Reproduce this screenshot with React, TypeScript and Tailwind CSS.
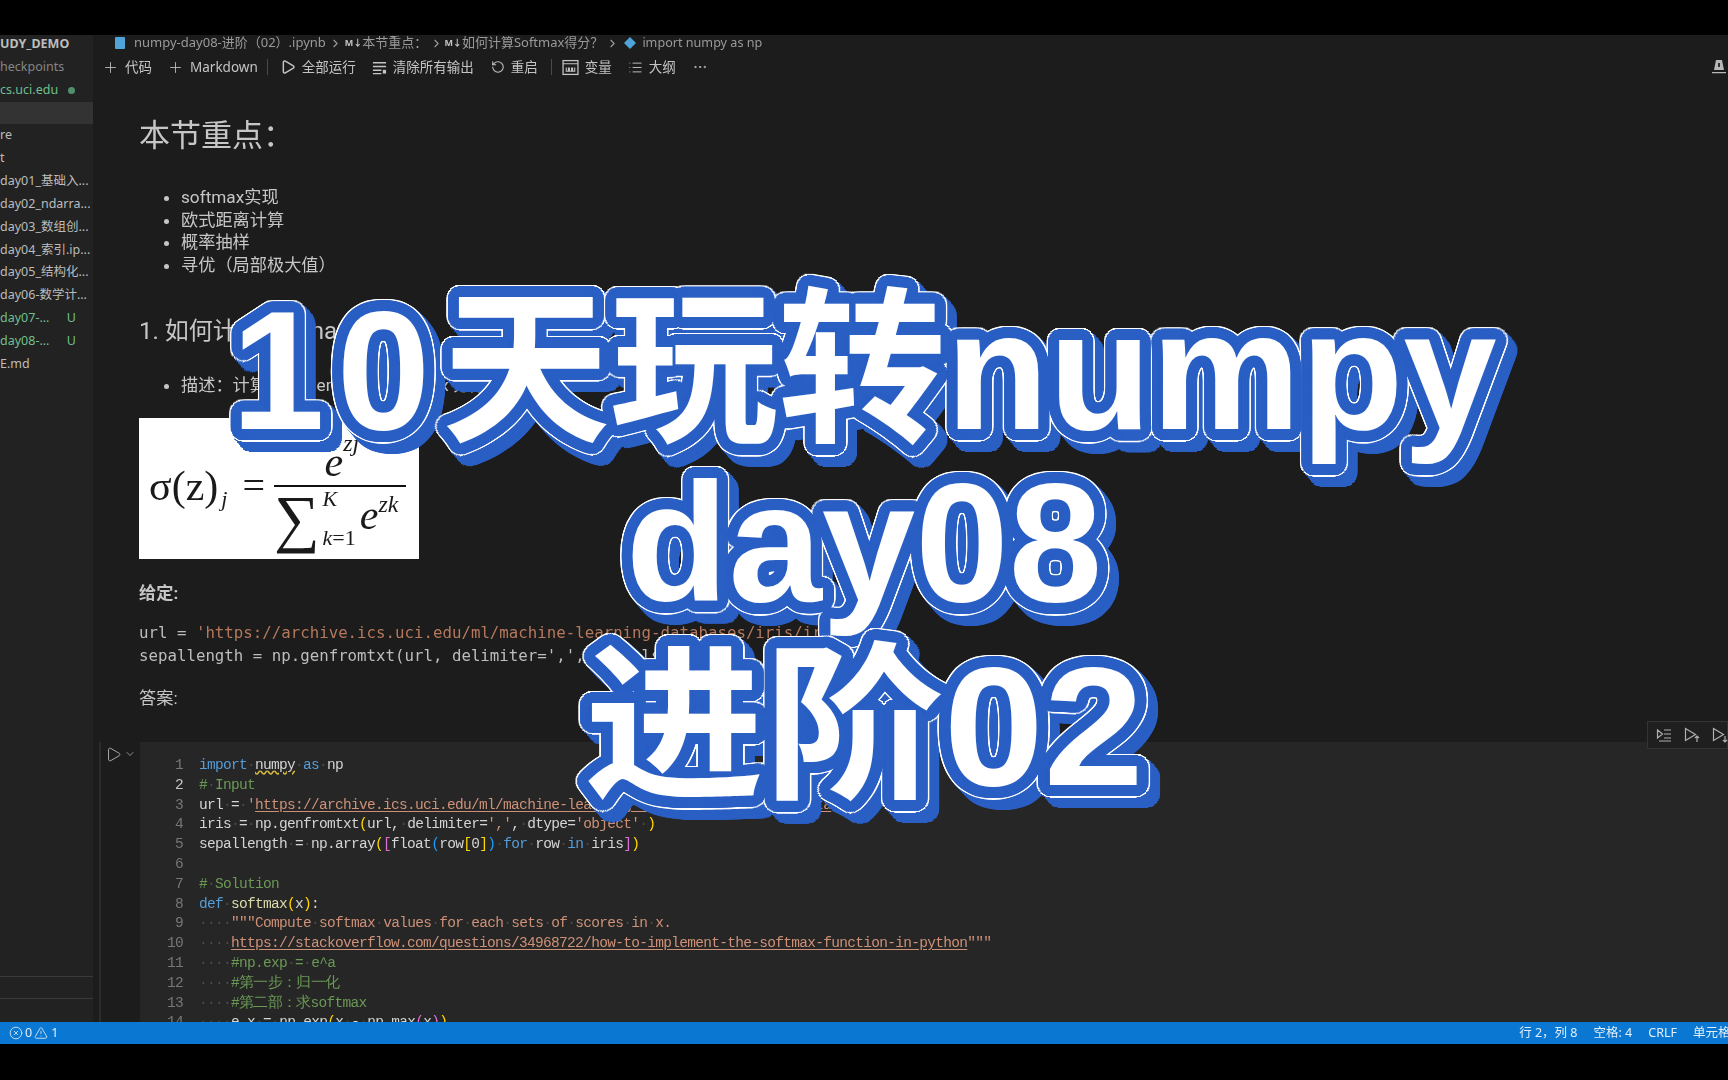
import { Plus, Play, RotateCcw, MoreHorizontal, ChevronRight, ChevronDown, CircleX, TriangleAlert, List } from "lucide-react";

const sidebarRows = [
  { text: "UDY_DEMO", cls: "font-bold text-[#bdbdbd]" },
  { text: "heckpoints", cls: "text-[#858585]" },
  { text: "cs.uci.edu", cls: "text-[#6fbf8f]", dot: true },
  { text: "", cls: "", active: true },
  { text: "re", cls: "text-[#bcbcbc]" },
  { text: "t", cls: "text-[#bcbcbc]" },
  { text: "day01_基础入...", cls: "text-[#bcbcbc]" },
  { text: "day02_ndarra...", cls: "text-[#bcbcbc]" },
  { text: "day03_数组创...", cls: "text-[#bcbcbc]" },
  { text: "day04_索引.ip...", cls: "text-[#bcbcbc]" },
  { text: "day05_结构化...", cls: "text-[#bcbcbc]" },
  { text: "day06-数学计...", cls: "text-[#bcbcbc]" },
  { text: "day07-...", cls: "text-[#6fbf8f]", badge: "U" },
  { text: "day08-...", cls: "text-[#6fbf8f]", badge: "U" },
  { text: "E.md", cls: "text-[#bcbcbc]" },
];

const KW = "text-[#569cd6]";
const STR = "text-[#ce9178]";
const LINK = "text-[#ce9178] underline decoration-[#ce9178] underline-offset-2";
const COM = "text-[#6a9955]";
const TXT = "text-[#d4d4d4]";
const FN = "text-[#dcdcaa]";
const Y = "text-[#ffd700]";
const P = "text-[#da70d6]";
const B = "text-[#179fff]";

const codeLines: [string, string][][] = [
  [["import", KW], [" ", TXT], ["numpy", "text-[#d4d4d4] underline decoration-wavy decoration-[#d7ba3d]"], [" ", TXT], ["as", KW], [" np", TXT]],
  [["# Input", COM]],
  [["url = ", TXT], ["'", STR], ["https://archive.ics.uci.edu/ml/machine-learning-databases/iris/iris.data", LINK], ["'", STR]],
  [["iris = np.genfromtxt", TXT], ["(", Y], ["url, delimiter=", TXT], ["','", STR], [", dtype=", TXT], ["'object'", STR], [" ", TXT], [")", Y]],
  [["sepallength = np.array", TXT], ["(", Y], ["[", P], ["float", TXT], ["(", B], ["row", TXT], ["[", Y], ["0", TXT], ["]", Y], [")", B], [" ", TXT], ["for", KW], [" row ", TXT], ["in", KW], [" iris", TXT], ["]", P], [")", Y]],
  [],
  [["# Solution", COM]],
  [["def", KW], [" ", TXT], ["softmax", FN], ["(", Y], ["x", TXT], [")", Y], [":", TXT]],
  [["    ", TXT], ['"""Compute softmax values for each sets of scores in x.', STR]],
  [["    ", TXT], ["https://stackoverflow.com/questions/34968722/how-to-implement-the-softmax-function-in-python", LINK], ['"""', STR]],
  [["    ", TXT], ["#np.exp = e^a", COM]],
  [["    ", TXT], ["#第一步：归一化", COM]],
  [["    ", TXT], ["#第二部：求softmax", COM]],
  [["    ", TXT], ["e_x = np.exp", TXT], ["(", Y], ["x - np.max", TXT], ["(", P], ["x", TXT], [")", P], [")", Y]],
];

function CodeText({ text, cls }: { text: string; cls: string }) {
  // spaces are drawn as dots, the way the editor shows whitespace
  const parts = text.split(/( )/).filter(Boolean);
  return (
    <span className={cls}>
      {parts.map((p, i) => (p === " " ? <span key={i} className="text-[#4b4b4b]">·</span> : <span key={i}>{p}</span>))}
    </span>
  );
}

function VariableIcon() {
  return (
    <svg width="17" height="17" viewBox="0 0 16 16" fill="none" stroke="currentColor" strokeWidth="1.2">
      <rect x="1" y="1.5" width="14" height="13" />
      <path d="M1 4.5h14M4 8v3.5h2V8M7 8v3.5h2V8M10 8v3.5h2V8" strokeWidth="1" />
    </svg>
  );
}

function ClearIcon() {
  return (
    <svg width="15" height="15" viewBox="0 0 16 16" fill="none" stroke="currentColor" strokeWidth="1.5" className="ml-[16px] shrink-0">
      <path d="M1 3h14M1 7h14M1 11h9M1 14.5h9" />
      <rect x="11.5" y="10.5" width="3.5" height="4" fill="currentColor" stroke="none" />
    </svg>
  );
}

function Toolbar() {
  return (
    <div className="h-[32px] flex items-center pl-[9px] text-[13.5px] text-[#c4c4c4] relative">
      <Plus size={17} strokeWidth={1.2} />
      <span className="ml-[6px]">代码</span>
      <Plus size={17} strokeWidth={1.2} className="ml-[15px]" />
      <span className="ml-[6px]">Markdown</span>
      <div className="w-px h-[16px] bg-[#4a4a4a] ml-[9px]" />
      <Play size={16} strokeWidth={2.2} className="ml-[12px]" />
      <span className="ml-[6px]">全部运行</span>
      <ClearIcon />
      <span className="ml-[6px]">清除所有输出</span>
      <RotateCcw size={14} strokeWidth={1.8} className="ml-[17px]" />
      <span className="ml-[6px]">重启</span>
      <div className="w-px h-[16px] bg-[#4a4a4a] ml-[13px]" />
      <span className="ml-[10px]"><VariableIcon /></span>
      <span className="ml-[6px]">变量</span>
      <List size={15} strokeWidth={1.5} className="ml-[16px]" />
      <span className="ml-[6px]">大纲</span>
      <MoreHorizontal size={16} strokeWidth={1.3} className="ml-[16px]" />
      <svg width="16" height="16" viewBox="0 0 16 16" className="ml-auto mr-[1px] fill-[#b8b8b8]">
        <path d="M5 1h6l2 10H3zM1 13h14v1.2H1z" />
        <rect x="7" y="4" width="2" height="4" className="fill-[#333333]" />
      </svg>
    </div>
  );
}

function Breadcrumbs() {
  return (
    <div className="h-[16px] flex items-center pl-[21px] text-[13px] text-[#9a9a9a] whitespace-nowrap">
      <svg width="12" height="14" viewBox="0 0 12 14" className="fill-[#4fa3d8] shrink-0"><path d="M2 1h8a1 1 0 0 1 1 1v10a1 1 0 0 1-1 1H2a1 1 0 0 1-1-1V2a1 1 0 0 1 1-1z" /></svg>
      <span className="ml-[8px]">numpy-day08-进阶（02）.ipynb</span>
      <ChevronRight size={13} className="ml-[3px]" />
      <span className="ml-[3px] text-[9px] font-bold text-[#c4c4c4]">M↓</span>
      <span>本节重点：</span>
      <ChevronRight size={13} className="ml-[3px]" />
      <span className="ml-[1px] text-[9px] font-bold text-[#c4c4c4]">M↓</span>
      <span>如何计算Softmax得分？</span>
      <ChevronRight size={13} className="ml-[3px]" />
      <svg width="14" height="14" viewBox="0 0 14 14" className="fill-[#4fa3d8] ml-[4px] shrink-0"><path d="M7 1l6 6-6 6-6-6z" /></svg>
      <span className="ml-[5px] text-[12.6px]">import numpy as np</span>
    </div>
  );
}

function Formula() {
  return (
    <div className="w-[280px] h-[141px] bg-white text-[#1a1a1a] flex items-center pl-[10px] pb-[6px] font-['Liberation_Serif',serif] shrink-0">
      <span className="text-[42px] leading-none">σ(z)</span>
      <span className="text-[22px] italic mt-[26px] ml-[3px]">j</span>
      <span className="text-[40px] leading-none ml-[15px] mr-[9px]">=</span>
      <div className="flex flex-col items-center w-[132px]">
        <div className="h-[66px] flex items-end pb-[2px] pl-[4px]">
          <span className="text-[42px] italic leading-none">e</span>
          <span className="text-[24px] italic leading-none mb-[28px]">zj</span>
        </div>
        <div className="w-full h-[2px] bg-[#111]" />
        <div className="h-[66px] w-full flex items-start">
          <span className="text-[64px] leading-none">∑</span>
          <div className="flex flex-col ml-[3px] text-[22px] italic leading-none">
            <span className="mt-[1px]">K</span>
            <span className="mt-[17px]">k<span className="not-italic">=1</span></span>
          </div>
          <span className="text-[42px] italic leading-none mt-[7px] ml-[4px]">e</span>
          <span className="text-[24px] italic leading-none mt-[5px]">zk</span>
        </div>
      </div>
    </div>
  );
}

function Markdown() {
  return (
    <div className="flex-1 pl-[46px] overflow-hidden text-[#c6c6c6] text-[17.2px] font-['Roboto','Noto_Sans_CJK_SC',sans-serif]">
      <h1 className="text-[31px] leading-[40px] mt-[33px]">本节重点：</h1>
      <ul className="list-disc ml-[42px] mt-[30px] leading-[22.6px]">
        <li>softmax实现</li>
        <li>欧式距离计算</li>
        <li>概率抽样</li>
        <li>寻优（局部极大值）</li>
      </ul>
      <h2 className="text-[24px] leading-[32px] mt-[39px]">1. 如何计算softmax得分？</h2>
      <ul className="list-disc ml-[42px] mt-[27px] leading-[22px]">
        <li>描述：计算 sepallength 的 softmax 分数。</li>
      </ul>
      <div className="mt-[22px]"><Formula /></div>
      <p className="font-bold mt-[23px] leading-[22px]">给定:</p>
      <pre className="font-['DejaVu_Sans_Mono',monospace] text-[15.75px] leading-[23px] mt-[17px] text-[#bdbdbd]">
        url = <span className="text-[#b5785c]">'https://archive.ics.uci.edu/ml/machine-learning-databases/iris/iris.data'</span>{"\n"}sepallength = np.genfromtxt(url, delimiter=',', usecols=[0])
      </pre>
      <p className="mt-[20px] leading-[22px]">答案:</p>
    </div>
  );
}

function CellToolbar() {
  return (
    <div className="absolute right-0 top-[686px] w-[81px] h-[28px] bg-[#1f1f1f] border border-[#333] flex items-center gap-[12px] pl-[8px] text-[#b0b0b0]">
      <svg width="16" height="16" viewBox="0 0 16 16" fill="none" stroke="currentColor" strokeWidth="1.2" className="shrink-0"><path d="M1.5 3l5 4-5 4zM8 3h7M8 7h7M8 11h7M3 14h12" /></svg>
      <svg width="16" height="16" viewBox="0 0 16 16" fill="none" stroke="currentColor" strokeWidth="1.2" className="shrink-0"><path d="M1.5 1.5l10 6-10 6zM13 15v-6M11 11l2-2 2 2" /></svg>
      <svg width="16" height="16" viewBox="0 0 16 16" fill="none" stroke="currentColor" strokeWidth="1.2" className="shrink-0"><path d="M1.5 1.5l10 6-10 6zM13 9v6M11 13l2 2 2-2" /></svg>
    </div>
  );
}

function CodeCell() {
  return (
    <div className="h-[280px] flex shrink-0 overflow-hidden">
      <div className="w-[47px] flex shrink-0 text-[#b5b5b5]">
        <div className="w-[6px]" />
        <div className="w-[2px] bg-[#2c2c2c]" />
        <div className="flex items-start pt-[3px] pl-[4px]">
          <Play size={17} strokeWidth={1.3} className="mt-[1px]" />
          <ChevronDown size={12} strokeWidth={1.5} className="mt-[3px] ml-[2px]" />
        </div>
      </div>
      <div className="flex-1 bg-[#262626] pt-[14px] font-['Liberation_Mono',monospace] text-[14.5px] tracking-[-0.7px] leading-[19.8px] whitespace-pre">
        {codeLines.map((line, i) => (
          <div key={i} className="flex h-[19.8px]">
            <span className={`w-[43px] text-right shrink-0 ${i === 1 ? "text-[#c6c6c6]" : "text-[#777777]"}`}>{i + 1}</span>
            <span className="ml-[16px]">
              {line.map(([t, c], j) => <CodeText key={j} text={t} cls={c} />)}
            </span>
          </div>
        ))}
      </div>
    </div>
  );
}

function Sidebar() {
  return (
    <div className="w-[93px] shrink-0 bg-[#222222] flex flex-col overflow-hidden text-[12.5px] whitespace-nowrap">
      {sidebarRows.map((r, i) => (
        <div key={i} className={`h-[22.85px] shrink-0 flex items-center ${i === 0 ? "-mt-[2px]" : ""} ${r.active ? "bg-[#333333]" : ""}`}>
          <span className={r.cls}>{r.text}</span>
          {r.dot && <span className="ml-[10px] w-[7px] h-[7px] rounded-full bg-[#4f8f6c]" />}
          {r.badge && <span className="ml-auto mr-[17px] text-[#6fbf8f]">{r.badge}</span>}
        </div>
      ))}
      <div className="mt-auto mb-[23px] h-[23px] border-y border-[#3a3a3a]" />
    </div>
  );
}

// rounded outline built from a ring of text shadows, -webkit-text-stroke gives sharp mitered corners
function ring(r: number, color: string, dx = 0, dy = 0) {
  const out: string[] = [];
  for (let i = 0; i < 40; i++) {
    const a = (i / 40) * Math.PI * 2;
    out.push(`${(dx + Math.cos(a) * r).toFixed(1)}px ${(dy + Math.sin(a) * r).toFixed(1)}px 0 ${color}`);
  }
  return out;
}

const BLUE = "#2a5fc4";
const titleShadow = [
  ...ring(3, BLUE), ...ring(6, BLUE), ...ring(9, BLUE), ...ring(11, BLUE),
  ...ring(12.5, "#ffffff"),
  ...ring(13, BLUE, 3, 3), ...ring(13, BLUE, 6, 6), ...ring(13, BLUE, 9, 10),
].join(",");

function Title() {
  return (
    <div
      style={{ textShadow: titleShadow }}
      className="absolute left-0 top-[283px] w-[1728px] text-center text-white font-['Liberation_Sans','Noto_Sans_CJK_SC',sans-serif] font-bold text-[168px] leading-[176px] whitespace-nowrap"
    >
      <div className="relative"><span className="tracking-[12px]">10</span>天玩转numpy</div>
      <div className="relative -mt-[4px]">day08</div>
      <div className="relative mt-[8px] scale-x-[1.07]">进阶02</div>
    </div>
  );
}

export default function App() {
  return (
    <div className="relative w-[1728px] h-[1080px] bg-black flex flex-col overflow-hidden font-['Noto_Sans','Noto_Sans_CJK_SC',sans-serif]">
      <div className="h-[35px] shrink-0" />
      <div className="flex-1 flex min-h-0 bg-[#1c1c1c] blur-[0.6px] relative">
        <Sidebar />
        <div className="flex-1 flex flex-col min-w-0">
          <Breadcrumbs />
          <Toolbar />
          <Markdown />
          <CodeCell />
        </div>
        <CellToolbar />
      </div>
      <div className="h-[22px] shrink-0 bg-[#0a78d2] flex items-center px-[9px] text-[12.5px] text-[#e4eef8] blur-[0.4px]">
        <CircleX size={14} strokeWidth={1.4} />
        <span className="ml-[2px]">0</span>
        <TriangleAlert size={14} strokeWidth={1.4} className="ml-[2px]" />
        <span className="ml-[3px]">1</span>
        <span className="ml-auto">行 2，列 8</span>
        <span className="ml-[16px]">空格: 4</span>
        <span className="ml-[16px]">CRLF</span>
        <span className="ml-[16px] w-[35px] overflow-hidden whitespace-nowrap -mr-[9px]">单元格</span>
      </div>
      <div className="h-[36px] shrink-0" />
      <Title />
    </div>
  );
}
